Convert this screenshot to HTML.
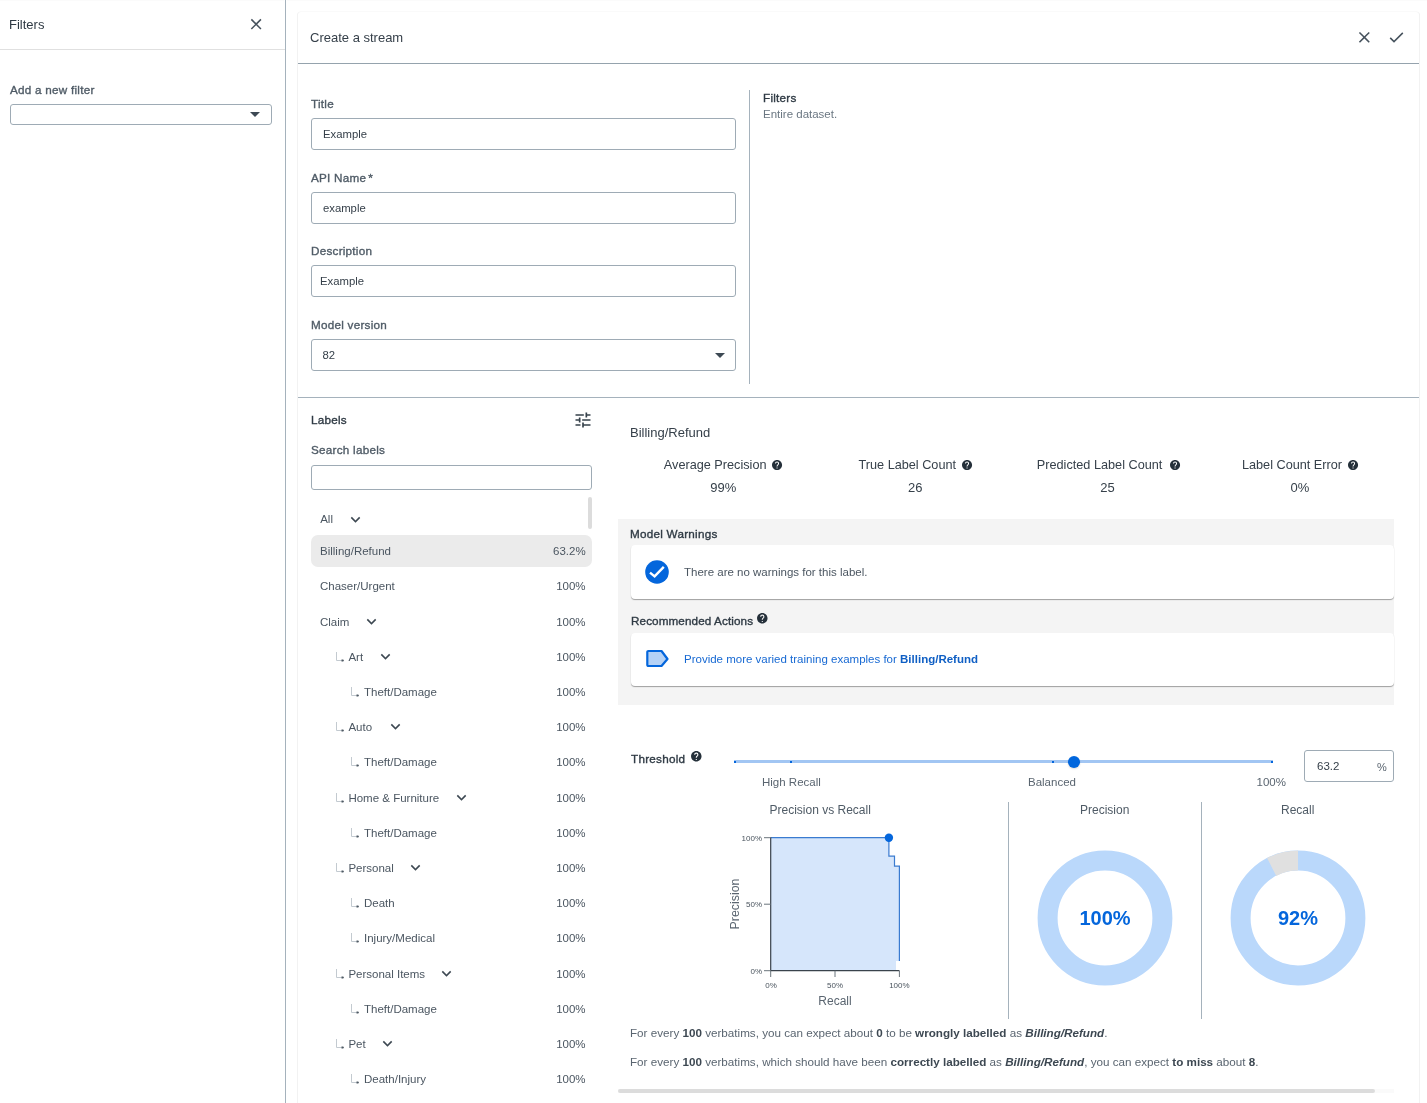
<!DOCTYPE html>
<html><head><meta charset="utf-8">
<style>
*{box-sizing:border-box;margin:0;padding:0}
html,body{width:1427px;height:1103px;overflow:hidden;background:#fff}
body{font-family:"Liberation Sans",sans-serif;color:#46515c;position:relative}
.a{position:absolute;white-space:nowrap}
.lbl{font-size:11.7px;letter-spacing:0.25px;color:#4f5b66;-webkit-text-stroke:0.35px #4f5b66}
.sb{font-size:11.7px;letter-spacing:0.25px;color:#2f3a44;-webkit-text-stroke:0.35px #2f3a44}
.inp{position:absolute;border:1px solid #9eabb5;border-radius:3px;background:#fff}
.txt{font-size:11.3px;color:#36404a}
.li{font-size:11.5px;color:#4b5661}
</style></head>
<body>
<div id="root" style="position:absolute;left:0;top:0;width:1427px;height:1103px;will-change:transform">
<div class="a" style="left:0;top:0;width:284px;height:1px;background:#fbfbfb"></div><div class="a" style="left:287px;top:0;width:1140px;height:1px;background:#fbfbfb"></div>
<!-- LEFT PANEL -->
<div class="a" style="left:285px;top:0;width:1px;height:1103px;background:#a5b2bc"></div>
<div class="a" style="left:0;top:49px;width:285px;height:1px;background:#e0e0e0"></div>
<div class="a" style="left:9px;top:17px;font-size:13px;color:#2f3a44">Filters</div>
<svg class="a" style="left:247.4px;top:15.2px" width="18.3" height="18.3" viewBox="0 0 24 24"><path d="M19 6.41L17.59 5 12 10.59 6.41 5 5 6.41 10.59 12 5 17.59 6.41 19 12 13.41 17.59 19 19 17.59 13.41 12z" fill="#46525d"/></svg>
<div class="a lbl" style="left:10px;top:83px">Add a new filter</div>
<div class="inp" style="left:10px;top:104px;width:262px;height:21px"></div>
<svg class="a" style="left:250px;top:112px" width="10" height="6" viewBox="0 0 10 6"><path d="M0 0H10L5 5Z" fill="#3d4954"/></svg>

<!-- CARD -->
<div class="a" style="left:298px;top:12px;width:1121px;height:1100px;border-radius:3px;box-shadow:-1px 0 0 #f2f2f2,1px 0 0 #f2f2f2,0 -1px 0 #fafafa"></div>
<div class="a" style="left:310px;top:30px;font-size:13px;color:#36404a">Create a stream</div>
<svg class="a" style="left:1355.1px;top:28.1px" width="18.7" height="18.7" viewBox="0 0 24 24"><path d="M19 6.41L17.59 5 12 10.59 6.41 5 5 6.41 10.59 12 5 17.59 6.41 19 12 13.41 17.59 19 19 17.59 13.41 12z" fill="#46525d"/></svg>
<svg class="a" style="left:1386.9px;top:28.2px" width="18.7" height="18.7" viewBox="0 0 24 24"><path d="M9 16.17L4.83 12l-1.42 1.41L9 19 21 7l-1.41-1.41z" fill="#46525d"/></svg>
<div class="a" style="left:298px;top:63px;width:1121px;height:1px;background:#95a3ad"></div>

<!-- FORM -->
<div class="a lbl" style="left:311px;top:97px">Title</div>
<div class="inp" style="left:311px;top:118px;width:425px;height:32px"></div>
<div class="a txt" style="left:323px;top:127.5px">Example</div>
<div class="a lbl" style="left:311px;top:171px">API Name<span style="margin-left:2px">*</span></div>
<div class="inp" style="left:311px;top:192px;width:425px;height:32px"></div>
<div class="a txt" style="left:323px;top:201.5px">example</div>
<div class="a lbl" style="left:311px;top:244px">Description</div>
<div class="inp" style="left:311px;top:265px;width:425px;height:32px"></div>
<div class="a txt" style="left:320px;top:274.5px">Example</div>
<div class="a lbl" style="left:311px;top:318px">Model version</div>
<div class="inp" style="left:311px;top:339px;width:425px;height:32px"></div>
<div class="a txt" style="left:322.5px;top:348.5px">82</div>
<svg class="a" style="left:715px;top:353px" width="10" height="6" viewBox="0 0 10 6"><path d="M0 0H10L5 5Z" fill="#3d4954"/></svg>

<div class="a" style="left:749px;top:90px;width:1px;height:294px;background:#a5b2bc"></div>
<div class="a sb" style="left:763px;top:91px">Filters</div>
<div class="a" style="left:763px;top:107.5px;font-size:11.5px;color:#6b7782">Entire dataset.</div>
<div class="a" style="left:298px;top:397px;width:1121px;height:1px;background:#a5b2bc"></div>


<!-- LABELS -->
<div class="a sb" style="left:311px;top:413px">Labels</div>
<svg class="a" style="left:572.5px;top:409.7px" width="20" height="20" viewBox="0 0 24 24"><path d="M3 17v2h6v-2H3zM3 5v2h10V5H3zm10 16v-2h8v-2h-8v-2h-2v6h2zM7 9v2H3v2h4v2h2V9H7zm14 4v-2H11v2h10zm-6-4h2V7h4V5h-4V3h-2v6z" fill="#36414b"/></svg>
<div class="a lbl" style="left:311px;top:443px">Search labels</div>
<div class="inp" style="left:311px;top:465px;width:281px;height:25px"></div>
<div class="a" style="left:588px;top:497px;width:4px;height:32px;border-radius:2px;background:#dcdcdc"></div>
<div class="a li" style="left:320.2px;top:512.8px">All</div>
<svg class="a" style="left:346px;top:509.5px" width="19" height="19" viewBox="0 0 24 24"><path d="M16.59 8.59L12 13.17 7.41 8.59 6 10l6 6 6-6z" fill="#3d4852"/></svg>
<div class="a" style="left:311px;top:535px;width:281px;height:32px;border-radius:7px;background:#ebebeb"></div>
<div class="a li" style="left:320.0px;top:544.5px">Billing/Refund</div>
<div class="a li" style="right:841.4px;top:544.5px">63.2%</div>
<div class="a li" style="left:320.0px;top:579.5px">Chaser/Urgent</div>
<div class="a li" style="right:841.4px;top:579.5px">100%</div>
<div class="a li" style="left:320.0px;top:615.5px">Claim</div>
<div class="a li" style="right:841.4px;top:615.5px">100%</div>
<svg class="a" style="left:362.2px;top:612.3px" width="19" height="19" viewBox="0 0 24 24"><path d="M16.59 8.59L12 13.17 7.41 8.59 6 10l6 6 6-6z" fill="#3d4852"/></svg>
<div class="a li" style="left:348.4px;top:650.5px">Art</div>
<div class="a li" style="right:841.4px;top:650.5px">100%</div>
<svg class="a" style="left:336px;top:651.5px" width="9" height="10"><path d="M0.5 0V8.5H6.5" stroke="#c3cad0" fill="none"/><path d="M5.5 7.4H7.2L8 8.5L7.2 9.6H5.5Z" fill="#4f5a64"/></svg>
<svg class="a" style="left:376.4px;top:647.3px" width="19" height="19" viewBox="0 0 24 24"><path d="M16.59 8.59L12 13.17 7.41 8.59 6 10l6 6 6-6z" fill="#3d4852"/></svg>
<div class="a li" style="left:364.0px;top:685.5px">Theft/Damage</div>
<div class="a li" style="right:841.4px;top:685.5px">100%</div>
<svg class="a" style="left:351px;top:686.5px" width="9" height="10"><path d="M0.5 0V8.5H6.5" stroke="#c3cad0" fill="none"/><path d="M5.5 7.4H7.2L8 8.5L7.2 9.6H5.5Z" fill="#4f5a64"/></svg>
<div class="a li" style="left:348.4px;top:720.5px">Auto</div>
<div class="a li" style="right:841.4px;top:720.5px">100%</div>
<svg class="a" style="left:336px;top:721.5px" width="9" height="10"><path d="M0.5 0V8.5H6.5" stroke="#c3cad0" fill="none"/><path d="M5.5 7.4H7.2L8 8.5L7.2 9.6H5.5Z" fill="#4f5a64"/></svg>
<svg class="a" style="left:385.6px;top:717.3px" width="19" height="19" viewBox="0 0 24 24"><path d="M16.59 8.59L12 13.17 7.41 8.59 6 10l6 6 6-6z" fill="#3d4852"/></svg>
<div class="a li" style="left:364.0px;top:755.5px">Theft/Damage</div>
<div class="a li" style="right:841.4px;top:755.5px">100%</div>
<svg class="a" style="left:351px;top:756.5px" width="9" height="10"><path d="M0.5 0V8.5H6.5" stroke="#c3cad0" fill="none"/><path d="M5.5 7.4H7.2L8 8.5L7.2 9.6H5.5Z" fill="#4f5a64"/></svg>
<div class="a li" style="left:348.4px;top:791.5px">Home &amp; Furniture</div>
<div class="a li" style="right:841.4px;top:791.5px">100%</div>
<svg class="a" style="left:336px;top:792.5px" width="9" height="10"><path d="M0.5 0V8.5H6.5" stroke="#c3cad0" fill="none"/><path d="M5.5 7.4H7.2L8 8.5L7.2 9.6H5.5Z" fill="#4f5a64"/></svg>
<svg class="a" style="left:452.4px;top:788.3px" width="19" height="19" viewBox="0 0 24 24"><path d="M16.59 8.59L12 13.17 7.41 8.59 6 10l6 6 6-6z" fill="#3d4852"/></svg>
<div class="a li" style="left:364.0px;top:826.5px">Theft/Damage</div>
<div class="a li" style="right:841.4px;top:826.5px">100%</div>
<svg class="a" style="left:351px;top:827.5px" width="9" height="10"><path d="M0.5 0V8.5H6.5" stroke="#c3cad0" fill="none"/><path d="M5.5 7.4H7.2L8 8.5L7.2 9.6H5.5Z" fill="#4f5a64"/></svg>
<div class="a li" style="left:348.4px;top:861.5px">Personal</div>
<div class="a li" style="right:841.4px;top:861.5px">100%</div>
<svg class="a" style="left:336px;top:862.5px" width="9" height="10"><path d="M0.5 0V8.5H6.5" stroke="#c3cad0" fill="none"/><path d="M5.5 7.4H7.2L8 8.5L7.2 9.6H5.5Z" fill="#4f5a64"/></svg>
<svg class="a" style="left:405.9px;top:858.3px" width="19" height="19" viewBox="0 0 24 24"><path d="M16.59 8.59L12 13.17 7.41 8.59 6 10l6 6 6-6z" fill="#3d4852"/></svg>
<div class="a li" style="left:364.0px;top:896.5px">Death</div>
<div class="a li" style="right:841.4px;top:896.5px">100%</div>
<svg class="a" style="left:351px;top:897.5px" width="9" height="10"><path d="M0.5 0V8.5H6.5" stroke="#c3cad0" fill="none"/><path d="M5.5 7.4H7.2L8 8.5L7.2 9.6H5.5Z" fill="#4f5a64"/></svg>
<div class="a li" style="left:364.0px;top:931.5px">Injury/Medical</div>
<div class="a li" style="right:841.4px;top:931.5px">100%</div>
<svg class="a" style="left:351px;top:932.5px" width="9" height="10"><path d="M0.5 0V8.5H6.5" stroke="#c3cad0" fill="none"/><path d="M5.5 7.4H7.2L8 8.5L7.2 9.6H5.5Z" fill="#4f5a64"/></svg>
<div class="a li" style="left:348.4px;top:967.5px">Personal Items</div>
<div class="a li" style="right:841.4px;top:967.5px">100%</div>
<svg class="a" style="left:336px;top:968.5px" width="9" height="10"><path d="M0.5 0V8.5H6.5" stroke="#c3cad0" fill="none"/><path d="M5.5 7.4H7.2L8 8.5L7.2 9.6H5.5Z" fill="#4f5a64"/></svg>
<svg class="a" style="left:436.9px;top:964.3px" width="19" height="19" viewBox="0 0 24 24"><path d="M16.59 8.59L12 13.17 7.41 8.59 6 10l6 6 6-6z" fill="#3d4852"/></svg>
<div class="a li" style="left:364.0px;top:1002.5px">Theft/Damage</div>
<div class="a li" style="right:841.4px;top:1002.5px">100%</div>
<svg class="a" style="left:351px;top:1003.5px" width="9" height="10"><path d="M0.5 0V8.5H6.5" stroke="#c3cad0" fill="none"/><path d="M5.5 7.4H7.2L8 8.5L7.2 9.6H5.5Z" fill="#4f5a64"/></svg>
<div class="a li" style="left:348.4px;top:1037.5px">Pet</div>
<div class="a li" style="right:841.4px;top:1037.5px">100%</div>
<svg class="a" style="left:336px;top:1038.5px" width="9" height="10"><path d="M0.5 0V8.5H6.5" stroke="#c3cad0" fill="none"/><path d="M5.5 7.4H7.2L8 8.5L7.2 9.6H5.5Z" fill="#4f5a64"/></svg>
<svg class="a" style="left:378.2px;top:1034.3px" width="19" height="19" viewBox="0 0 24 24"><path d="M16.59 8.59L12 13.17 7.41 8.59 6 10l6 6 6-6z" fill="#3d4852"/></svg>
<div class="a li" style="left:364.0px;top:1072.5px">Death/Injury</div>
<div class="a li" style="right:841.4px;top:1072.5px">100%</div>
<svg class="a" style="left:351px;top:1073.5px" width="9" height="10"><path d="M0.5 0V8.5H6.5" stroke="#c3cad0" fill="none"/><path d="M5.5 7.4H7.2L8 8.5L7.2 9.6H5.5Z" fill="#4f5a64"/></svg>

<!-- RIGHT PANE -->
<div class="a" style="left:630px;top:425px;font-size:13px;color:#36404a">Billing/Refund</div>
<div class="a" style="left:523.2px;width:400px;top:458px;text-align:center;font-size:12.7px;color:#36404a">Average Precision<span style="display:inline-block;width:16px"></span></div>
<div class="a" style="left:523.2px;width:400px;top:480px;text-align:center;font-size:13px;color:#36404a">99%</div>
<div class="a" style="left:715.3px;width:400px;top:458px;text-align:center;font-size:12.7px;color:#36404a">True Label Count<span style="display:inline-block;width:16px"></span></div>
<div class="a" style="left:715.3px;width:400px;top:480px;text-align:center;font-size:13px;color:#36404a">26</div>
<div class="a" style="left:907.5999999999999px;width:400px;top:458px;text-align:center;font-size:12.7px;color:#36404a">Predicted Label Count<span style="display:inline-block;width:16px"></span></div>
<div class="a" style="left:907.5999999999999px;width:400px;top:480px;text-align:center;font-size:13px;color:#36404a">25</div>
<div class="a" style="left:1100px;width:400px;top:458px;text-align:center;font-size:12.7px;color:#36404a">Label Count Error<span style="display:inline-block;width:16px"></span></div>
<div class="a" style="left:1100px;width:400px;top:480px;text-align:center;font-size:13px;color:#36404a">0%</div>

<div class="a" style="left:618px;top:519px;width:776px;height:186px;background:#f4f4f4"></div>
<div class="a sb" style="left:630px;top:527px">Model Warnings</div>
<div class="a" style="left:631px;top:545px;width:763px;height:54px;background:#fff;border-radius:4px;box-shadow:0 1px 1px rgba(0,0,0,0.35)"></div>
<svg class="a" style="left:645px;top:560px" width="24" height="24" viewBox="0 0 24 24"><circle cx="12" cy="12" r="11.8" fill="#0466dc"/><path d="M5 12.6L9.6 16.4L18.8 6.8" stroke="#fff" stroke-width="2.4" fill="none"/></svg>
<div class="a" style="left:684px;top:566px;font-size:11.5px;color:#4b5661">There are no warnings for this label.</div>
<div class="a sb" style="left:631px;top:613.5px;letter-spacing:0.1px">Recommended Actions</div>
<div class="a" style="left:631px;top:633px;width:763px;height:53px;background:#fff;border-radius:4px;box-shadow:0 1px 1px rgba(0,0,0,0.35)"></div>
<svg class="a" style="left:645px;top:649px" width="25" height="20" viewBox="0 0 25 20"><path d="M3.5 2H16.5L22.5 10L16.5 17H3.5Q2.3 17 2.3 15.8V3.2Q2.3 2 3.5 2Z" fill="#b5d2f6" stroke="#0466dc" stroke-width="2.2" stroke-linejoin="round"/></svg>
<div class="a" style="left:684px;top:652.5px;font-size:11.5px;color:#1769d3">Provide more varied training examples for <b style="color:#0f5fc4">Billing/Refund</b></div>

<!-- THRESHOLD -->
<div class="a sb" style="left:631px;top:752px">Threshold</div>
<div class="a" style="left:734px;top:760px;width:539px;height:3px;background:#a2c6f3"></div>
<div class="a" style="left:734px;top:760.5px;width:2px;height:2px;background:#0466dc"></div>
<div class="a" style="left:790px;top:760.5px;width:2px;height:2px;background:#0466dc"></div>
<div class="a" style="left:1051.5px;top:760.5px;width:2px;height:2px;background:#0466dc"></div>
<div class="a" style="left:1270.5px;top:760.5px;width:2px;height:2px;background:#0466dc"></div>
<div class="a" style="left:1068px;top:756px;width:12.4px;height:12px;border-radius:50%;background:#0066dd;box-shadow:0 1px 2px rgba(0,0,0,0.15)"></div>
<div class="a" style="left:762px;top:775.5px;font-size:11.5px;color:#5a6570">High Recall</div>
<div class="a" style="left:1028px;top:775.5px;font-size:11.5px;color:#5a6570">Balanced</div>
<div class="a" style="left:1256.5px;top:775.5px;font-size:11.5px;color:#5a6570">100%</div>
<div class="inp" style="left:1304px;top:750px;width:90px;height:32px"></div>
<div class="a" style="left:1317px;top:760px;font-size:11.5px;color:#36404a">63.2</div>
<div class="a" style="left:1377px;top:760.5px;font-size:11px;color:#5a6570">%</div>

<!-- CHARTS -->
<div class="a" style="left:1008px;top:802px;width:1px;height:217px;background:#a5b2bc"></div>
<div class="a" style="left:1201px;top:802px;width:1px;height:217px;background:#a5b2bc"></div>
<div class="a" style="left:769.5px;top:803px;font-size:12px;color:#4f5b66">Precision vs Recall</div>
<div class="a" style="left:1080px;top:803px;font-size:12px;color:#4f5b66">Precision</div>
<div class="a" style="left:1281px;top:803px;font-size:12px;color:#4f5b66">Recall</div>
<svg class="a" style="left:720px;top:825px" width="240" height="190" viewBox="720 825 240 190">
<path d="M770.7 837.7H888.9V856.2H894.5V866.2H899.4V961H896V970.7H770.7Z" fill="#d6e6fb"/>
<path d="M770.7 837.7H888.9V856.2H894.5V866.2H899.4V961" fill="none" stroke="#3a7bd0" stroke-width="1.2"/>
<path d="M770.7 837.2V970.7H899.4" fill="none" stroke="#3a434c" stroke-width="1.2"/>
<path d="M764 837.7H770.7M764 904.2H770.7M764 970.7H770.7M770.7 970.7V977M835 970.7V977M899.4 970.7V977" stroke="#6b747c" stroke-width="1"/>
<circle cx="888.9" cy="837.7" r="4.2" fill="#0466dc"/>
<g font-family="Liberation Sans" font-size="8" fill="#4a545e">
<text x="762" y="840.5" text-anchor="end">100%</text>
<text x="762" y="907" text-anchor="end">50%</text>
<text x="762" y="973.5" text-anchor="end">0%</text>
<text x="771" y="988" text-anchor="middle">0%</text>
<text x="835" y="988" text-anchor="middle">50%</text>
<text x="899.4" y="988" text-anchor="middle">100%</text>
</g>
<text x="835" y="1004.6" text-anchor="middle" font-family="Liberation Sans" font-size="12" fill="#5a6570">Recall</text>
<text transform="translate(739.4 904) rotate(-90)" text-anchor="middle" font-family="Liberation Sans" font-size="12.4" fill="#5a6570">Precision</text>
</svg>
<svg class="a" style="left:1030px;top:843px" width="150" height="150" viewBox="-75 -75 150 150">
<circle r="57.4" fill="none" stroke="#bad8fb" stroke-width="20"/>
</svg>
<div class="a" style="left:1005px;width:200px;top:906.5px;text-align:center;font-size:20px;font-weight:700;color:#0466dc">100%</div>
<svg class="a" style="left:1223px;top:843px" width="150" height="150" viewBox="-75 -75 150 150">
<circle r="57.4" fill="none" stroke="#bad8fb" stroke-width="20"/>
<path d="M0 -67.4A67.4 67.4 0 0 0 -30.9 -59.9L-21.7 -42.1A47.4 47.4 0 0 1 0 -47.4Z" fill="#e0e0e0"/>
</svg>
<div class="a" style="left:1198px;width:200px;top:906.5px;text-align:center;font-size:20px;font-weight:700;color:#0466dc">92%</div>

<div class="a" style="left:630px;top:1025.5px;font-size:11.66px;color:#5a6570">For every <b style="color:#3d4852">100</b> verbatims, you can expect about <b style="color:#3d4852">0</b> to be <b style="color:#3d4852">wrongly labelled</b> as <b style="color:#3d4852"><i>Billing/Refund</i></b>.</div>
<div class="a" style="left:630px;top:1054.5px;font-size:11.66px;color:#5a6570">For every <b style="color:#3d4852">100</b> verbatims, which should have been <b style="color:#3d4852">correctly labelled</b> as <b style="color:#3d4852"><i>Billing/Refund</i></b>, you can expect <b style="color:#3d4852">to miss</b> about <b style="color:#3d4852">8</b>.</div>
<div class="a" style="left:618px;top:1089px;width:776px;height:4px;background:#fafafa"></div>
<div class="a" style="left:618px;top:1089px;width:757px;height:4px;border-radius:2px;background:#dcdcdc"></div>
<svg class="a" style="left:771.0px;top:458.7px" width="12.1" height="12.1" viewBox="0 0 24 24"><path d="M12 2C6.48 2 2 6.48 2 12s4.48 10 10 10 10-4.48 10-10S17.52 2 12 2zm1 17h-2v-2h2v2zm2.07-7.75l-.9.92C13.45 12.9 13 13.5 13 15h-2v-.5c0-1.1.45-2.1 1.17-2.83l1.24-1.26c.37-.36.59-.86.59-1.41 0-1.1-.9-2-2-2s-2 .9-2 2H8c0-2.21 1.79-4 4-4s4 1.79 4 4c0 .88-.36 1.68-.93 2.25z" fill="#25303a"/></svg><svg class="a" style="left:961.0px;top:458.7px" width="12.1" height="12.1" viewBox="0 0 24 24"><path d="M12 2C6.48 2 2 6.48 2 12s4.48 10 10 10 10-4.48 10-10S17.52 2 12 2zm1 17h-2v-2h2v2zm2.07-7.75l-.9.92C13.45 12.9 13 13.5 13 15h-2v-.5c0-1.1.45-2.1 1.17-2.83l1.24-1.26c.37-.36.59-.86.59-1.41 0-1.1-.9-2-2-2s-2 .9-2 2H8c0-2.21 1.79-4 4-4s4 1.79 4 4c0 .88-.36 1.68-.93 2.25z" fill="#25303a"/></svg><svg class="a" style="left:1168.5px;top:458.7px" width="12.1" height="12.1" viewBox="0 0 24 24"><path d="M12 2C6.48 2 2 6.48 2 12s4.48 10 10 10 10-4.48 10-10S17.52 2 12 2zm1 17h-2v-2h2v2zm2.07-7.75l-.9.92C13.45 12.9 13 13.5 13 15h-2v-.5c0-1.1.45-2.1 1.17-2.83l1.24-1.26c.37-.36.59-.86.59-1.41 0-1.1-.9-2-2-2s-2 .9-2 2H8c0-2.21 1.79-4 4-4s4 1.79 4 4c0 .88-.36 1.68-.93 2.25z" fill="#25303a"/></svg><svg class="a" style="left:1347.0px;top:458.7px" width="12.1" height="12.1" viewBox="0 0 24 24"><path d="M12 2C6.48 2 2 6.48 2 12s4.48 10 10 10 10-4.48 10-10S17.52 2 12 2zm1 17h-2v-2h2v2zm2.07-7.75l-.9.92C13.45 12.9 13 13.5 13 15h-2v-.5c0-1.1.45-2.1 1.17-2.83l1.24-1.26c.37-.36.59-.86.59-1.41 0-1.1-.9-2-2-2s-2 .9-2 2H8c0-2.21 1.79-4 4-4s4 1.79 4 4c0 .88-.36 1.68-.93 2.25z" fill="#25303a"/></svg><svg class="a" style="left:755.6px;top:612.0px" width="12.6" height="12.6" viewBox="0 0 24 24"><path d="M12 2C6.48 2 2 6.48 2 12s4.48 10 10 10 10-4.48 10-10S17.52 2 12 2zm1 17h-2v-2h2v2zm2.07-7.75l-.9.92C13.45 12.9 13 13.5 13 15h-2v-.5c0-1.1.45-2.1 1.17-2.83l1.24-1.26c.37-.36.59-.86.59-1.41 0-1.1-.9-2-2-2s-2 .9-2 2H8c0-2.21 1.79-4 4-4s4 1.79 4 4c0 .88-.36 1.68-.93 2.25z" fill="#25303a"/></svg><svg class="a" style="left:690.0px;top:750.2px" width="12.6" height="12.6" viewBox="0 0 24 24"><path d="M12 2C6.48 2 2 6.48 2 12s4.48 10 10 10 10-4.48 10-10S17.52 2 12 2zm1 17h-2v-2h2v2zm2.07-7.75l-.9.92C13.45 12.9 13 13.5 13 15h-2v-.5c0-1.1.45-2.1 1.17-2.83l1.24-1.26c.37-.36.59-.86.59-1.41 0-1.1-.9-2-2-2s-2 .9-2 2H8c0-2.21 1.79-4 4-4s4 1.79 4 4c0 .88-.36 1.68-.93 2.25z" fill="#25303a"/></svg>
</div>
</body></html>
